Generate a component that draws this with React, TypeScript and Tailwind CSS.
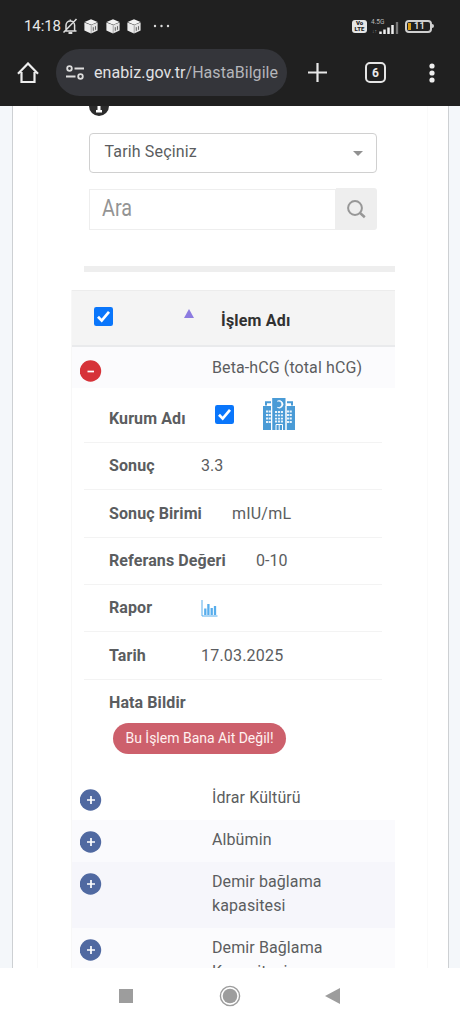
import React from "react";

function Check({ className = "" }: { className?: string }) {
  return (
    <svg className={className} width="19" height="19" viewBox="0 0 19 19">
      <rect width="19" height="19" rx="2.2" fill="#0a76fb" />
      <path d="M4 9.8l3.7 3.8L15 4.8" fill="none" stroke="#fff" strokeWidth="2.7" />
    </svg>
  );
}

function Cube() {
  return (
    <svg width="14" height="15" viewBox="0 0 14 15">
      <path d="M7 .3l6.600 2.600L7.300 5.700.500 3z" fill="#f2f2f2" />
      <path d="M.4 3.500l6.500 2.600v8.500L.4 11.600z" fill="#ececec" />
      <path d="M7.200 6.100l6.400-2.600v8.100l-6.400 3z" fill="#e2e2e2" />
      <path d="M9.300 8.200v3.600M11.500 7.200v3.600" stroke="#555" strokeWidth=".9" />
    </svg>
  );
}

function Hospital() {
  return (
    <svg width="32" height="32" viewBox="0 0 32 32">
      <path d="M0 8h8v24H0zM23.500 8H32v24h-8.500zM9.200 0h13.300v32H9.200z" fill="#4a9bd6" />
      <path d="M3 7.500V4.300h5M24 4.300h5v3.200" fill="none" stroke="#4a9bd6" strokeWidth="2" />
      <path d="M14.300 3.200a3.700 3.700 0 1 1 0 6.200 3.300 3.300 0 1 0 0-6.200z" fill="#fff" stroke="#fff" strokeWidth=".6" />
      <g fill="none" stroke="#e8f3fb" strokeWidth="1.800">
        <path d="M12 14h8M12 17.300h8M12 20.600h8M12 23.500h8" strokeDasharray="2.100 .85" />
        <path d="M3 13.500h5M3 17h5M3 20.500h5M3 24h5M24 13.500h5M24 17h5M24 20.500h5M24 24h5" strokeDasharray="2.100 .6" />
      </g>
      <path d="M13 32v-5.500h6.500V32M16.200 26.500V32M8.600 8v24M23 8v24" fill="none" stroke="#fff" strokeWidth="1" />
    </svg>
  );
}

function Chart() {
  return (
    <svg width="17" height="17" viewBox="0 0 17 17" fill="none" stroke="#57adec">
      <path d="M1 0v16h15.500" strokeWidth="1" />
      <path d="M4.300 15V8.500M7.400 15V4M10.700 15V8M14 15V6" strokeWidth="2.300" />
    </svg>
  );
}

function Detail({ label, children, gap = "" }: { label: string; children?: React.ReactNode; gap?: string }) {
  return (
    <div className="flex h-[47.35px] items-center border-b border-[#f3f3f3] pl-[25px]">
      <span className={`font-bold tracking-[0.1px] ${gap}`}>{label}</span>
      {children}
    </div>
  );
}

function Row({ name, className, open = false }: { name: string; className: string; open?: boolean }) {
  return (
    <div className={`flex shrink-0 items-start pl-2 ${className}`}>
      <svg className={`shrink-0 ${open ? "mt-[13px]" : "mt-[11px]"}`} width="22" height="22" viewBox="0 0 22 22">
        <circle cx="10.500" cy="11" r="10.700" fill={open ? "#d63339" : "#5069a1"} />
        <path d={open ? "M7.500 11.500h6.500" : "M7 11h8M11 7v8"} stroke="#fff" strokeWidth="1.700" />
      </svg>
      <span className={`ml-[110px] w-[156px] leading-[23.5px] tracking-[0.1px] ${open ? "mt-[9px]" : "mt-[8px]"}`}>{name}</span>
    </div>
  );
}

export default function App() {
  return (
    <div className="flex h-[1024px] w-[460px] flex-col overflow-hidden bg-white font-['Roboto',sans-serif] text-[16px] text-[#5b5d60]">
      <header className="h-[106px] shrink-0 bg-[#202020] text-[#e8e8e8]">
        <div className="flex h-[49px] items-center pl-6 pr-[26px] pt-[3px]">
          <span className="w-[38px] whitespace-nowrap text-[15px] tracking-[-0.1px]">14:18</span>
          <svg width="17" height="17" viewBox="0 0 17 17" fill="none" stroke="#ddd" strokeWidth="1.500">
            <path d="M2.500 13h12M4 12.500V7.300a4.300 4.300 0 0 1 8.600 0v5.200M8.300 3V1.500M1.500 14.500l13-13.500" />
            <path d="M6.500 15h3.800" strokeWidth="2" />
          </svg>
          <div className="ml-[5px] flex gap-[7.500px]">
            <Cube />
            <Cube />
            <Cube />
          </div>
          <svg className="ml-[12px]" width="17" height="4" fill="#ddd">
            <circle cx="2" cy="2" r="1.200" />
            <circle cx="8.500" cy="2" r="1.200" />
            <circle cx="15" cy="2" r="1.200" />
          </svg>
          <div className="ml-auto flex h-[13px] w-[15px] flex-col items-center justify-center rounded-[3px] bg-[#e6e6e6] text-[6px] font-black leading-[6px] text-[#222]">
            <span className="h-[6px]">Vo</span>
            <span className="h-[6px]">LTE</span>
          </div>
          <div className="ml-[4px] flex h-[15px] w-[28px] items-end">
            <div className="flex h-[15px] w-[8px] flex-col justify-between whitespace-nowrap text-[6.500px] leading-[6px] text-[#bbb]">
              <span>4.5G</span>
              <span className="pl-px text-[5px] text-[#888]">↓↑</span>
            </div>
            <svg width="20" height="12" viewBox="0 0 20 12">
              <path d="M1.500 9.500V12M5.500 7.500V12M9.500 5.500V12M13.500 3V12" stroke="#eee" strokeWidth="2.500" />
              <path d="M18 0v12" stroke="#777" strokeWidth="2.300" />
            </svg>
          </div>
          <div className="ml-[6px] flex h-[13px] w-[27px] items-center rounded-[4px] border-2 border-[#d0d0d0] pl-px">
            <span className="h-[7px] w-[3px] bg-[#d99a14]" />
            <span className="ml-[3px] text-[9.500px] font-medium leading-none">11</span>
          </div>
          <span className="h-[4px] w-[2px] rounded-r bg-[#d0d0d0]" />
        </div>
        <div className="flex h-[47px] items-center pl-[17px]">
          <svg width="22" height="22" viewBox="0 0 22 22" fill="none" stroke="#eee" strokeWidth="2.200">
            <path d="M4.500 10v10h13V10M1 11.800L11 1.500l10 10.300" />
          </svg>
          <div className="ml-[17px] flex h-[47px] w-[231px] items-center rounded-full bg-[#34353a] pl-[10px]">
            <svg width="18" height="15" viewBox="0 0 18 15" fill="none" stroke="#ddd" strokeWidth="1.800">
              <circle cx="3.500" cy="3.500" r="2.300" />
              <circle cx="14.500" cy="11.500" r="2.300" />
              <path d="M8.500 3.500H18M0 11.500h9.500" />
            </svg>
            <span className="ml-[10px] whitespace-nowrap pt-px text-[16px] tracking-[0.05px] text-[#e2e2e4]">
              enabiz.gov.tr<span className="text-[#b5b6ba]">/HastaBilgile</span>
            </span>
          </div>
          <svg className="ml-[21px]" width="19" height="19" viewBox="0 0 19 19" stroke="#e8e8e8" strokeWidth="2.200">
            <path d="M9.500 0v19M0 9.500h19" />
          </svg>
          <div className="ml-[38px] flex h-[21px] w-[21px] items-center justify-center rounded-[5px] border-2 border-[#e5e5e5] text-[12px] font-bold">6</div>
          <svg className="ml-[43px]" width="6" height="20" fill="#eee">
            <circle cx="3" cy="3" r="2.600" />
            <circle cx="3" cy="10" r="2.600" />
            <circle cx="3" cy="17" r="2.600" />
          </svg>
        </div>
      </header>

      <main className="flex h-[862px] shrink-0 overflow-hidden bg-[#f4f7fa] pl-[12px]">
        <div className="flex w-[437px] flex-col border-l border-r border-[#cdd0d3] bg-white pl-[24px] pr-[20px]">
          <div className="flex h-[862px] flex-col overflow-hidden border-l border-r border-[#fafafa] pl-[33px]">
            <svg className="ml-[18px] shrink-0" width="20" height="11" viewBox="0 0 20 11">
              <circle cx="10" cy="0" r="10" fill="#2c2c2c" />
              <path d="M8.500 0h3v4H13v2.500H7V4h1.500z" fill="#fff" />
            </svg>
            <div className="ml-[18px] mt-[16px] flex h-[40px] w-[288px] shrink-0 items-center justify-between rounded-[4px] border border-[#d0d0d0] pl-[14.500px] pr-[13px]">
              <span className="pb-[2px] tracking-[0.15px]">Tarih Seçiniz</span>
              <svg width="10" height="5" viewBox="0 0 10 5">
                <path d="M0 0h10L5 5z" fill="#919191" />
              </svg>
            </div>
            <div className="ml-[18px] mt-[15px] flex h-[43px] w-[288px] shrink-0">
              <div className="my-px flex w-[247px] items-center border border-[#eeeeee] pl-[12px] text-[23px] text-[#949494]">
                <span className="origin-left scale-x-[0.86]">Ara</span>
              </div>
              <div className="mb-px flex w-[41px] items-center justify-center rounded-r-[3px] bg-[#eeeeee]">
                <svg width="19" height="19" viewBox="0 0 19 19" fill="none" stroke="#979797" strokeWidth="2">
                  <circle cx="8" cy="8" r="6.900" />
                  <path d="M12.800 12.800l5 4.500" strokeWidth="2.500" />
                </svg>
              </div>
            </div>
            <div className="ml-[13px] mt-[35px] h-[6px] w-[311px] shrink-0 bg-[#eeeeee]" />

            <div className="mt-[18px] w-[324px] shrink-0 border-l border-[#f7f7f7]">
              <div className="flex h-[57px] items-start border-b-2 border-t border-b-[#e9eaec] border-t-[#ececec] bg-[#f4f4f4] pl-[22px]">
                <Check className="mt-[16px]" />
                <svg className="ml-[71px] mt-[18px]" width="10" height="9">
                  <path d="M5 0l5 9H0z" fill="#8c7be0" />
                </svg>
                <span className="ml-[27px] mt-[18px] font-bold tracking-[0.2px] text-[#313131]">İşlem Adı</span>
              </div>
              <Row name="Beta-hCG (total hCG)" className="h-[41px] bg-[#fbfbfd]" open />
              <div className="ml-[12px] h-[390px] w-[298px]">
                <div className="flex h-[55px] items-start border-b border-[#f3f3f3] pl-[25px]">
                  <span className="mt-[19px] w-[106px] font-bold tracking-[0.1px]">Kurum Adı</span>
                  <Check className="mt-[17px]" />
                  <div className="ml-[29px] mt-[10px]">
                    <Hospital />
                  </div>
                </div>
                <Detail label="Sonuç" gap="w-[92px]">3.3</Detail>
                <Detail label="Sonuç Birimi" gap="w-[123px]"><span className="tracking-[0.2px]">mIU/mL</span></Detail>
                <Detail label="Referans Değeri" gap="w-[147px]">0-10</Detail>
                <Detail label="Rapor" gap="w-[92px]"><Chart /></Detail>
                <Detail label="Tarih" gap="w-[92px]">
                  <span className="tracking-[0.2px]">17.03.2025</span>
                </Detail>
                <div className="pl-[25px] pt-[11px]">
                  <div className="font-bold tracking-[0.1px]">Hata Bildir</div>
                  <div className="ml-[4px] mt-[8px] flex h-[31px] w-[173px] items-center justify-center rounded-full bg-[#cd606c] text-[14px] text-[#fff1f0]">
                    Bu İşlem Bana Ait Değil!
                  </div>
                </div>
              </div>
              <Row name="İdrar Kültürü" className="h-[42px]" />
              <Row name="Albümin" className="h-[42px] bg-[#fafafd]" />
              <Row name="Demir bağlama kapasitesi" className="h-[66px] bg-[#f6f6fb]" />
              <Row name="Demir Bağlama Kapasitesi" className="h-[66px] bg-[#fbfbfd]" />
            </div>
          </div>
        </div>
      </main>

      <nav className="flex h-[56px] shrink-0 items-center justify-between bg-white pl-[119px] pr-[120px]">
        <span className="h-[14px] w-[14px] bg-[#9d9d9d]" />
        <svg className="ml-px" width="22" height="22" viewBox="0 0 22 22">
          <circle cx="11" cy="11" r="9.600" fill="none" stroke="#9d9d9d" strokeWidth="1.400" />
          <circle cx="11" cy="11" r="7.300" fill="#9d9d9d" />
        </svg>
        <svg width="15" height="16" viewBox="0 0 15 16">
          <path d="M15 0v16L0 8z" fill="#9d9d9d" />
        </svg>
      </nav>
    </div>
  );
}
